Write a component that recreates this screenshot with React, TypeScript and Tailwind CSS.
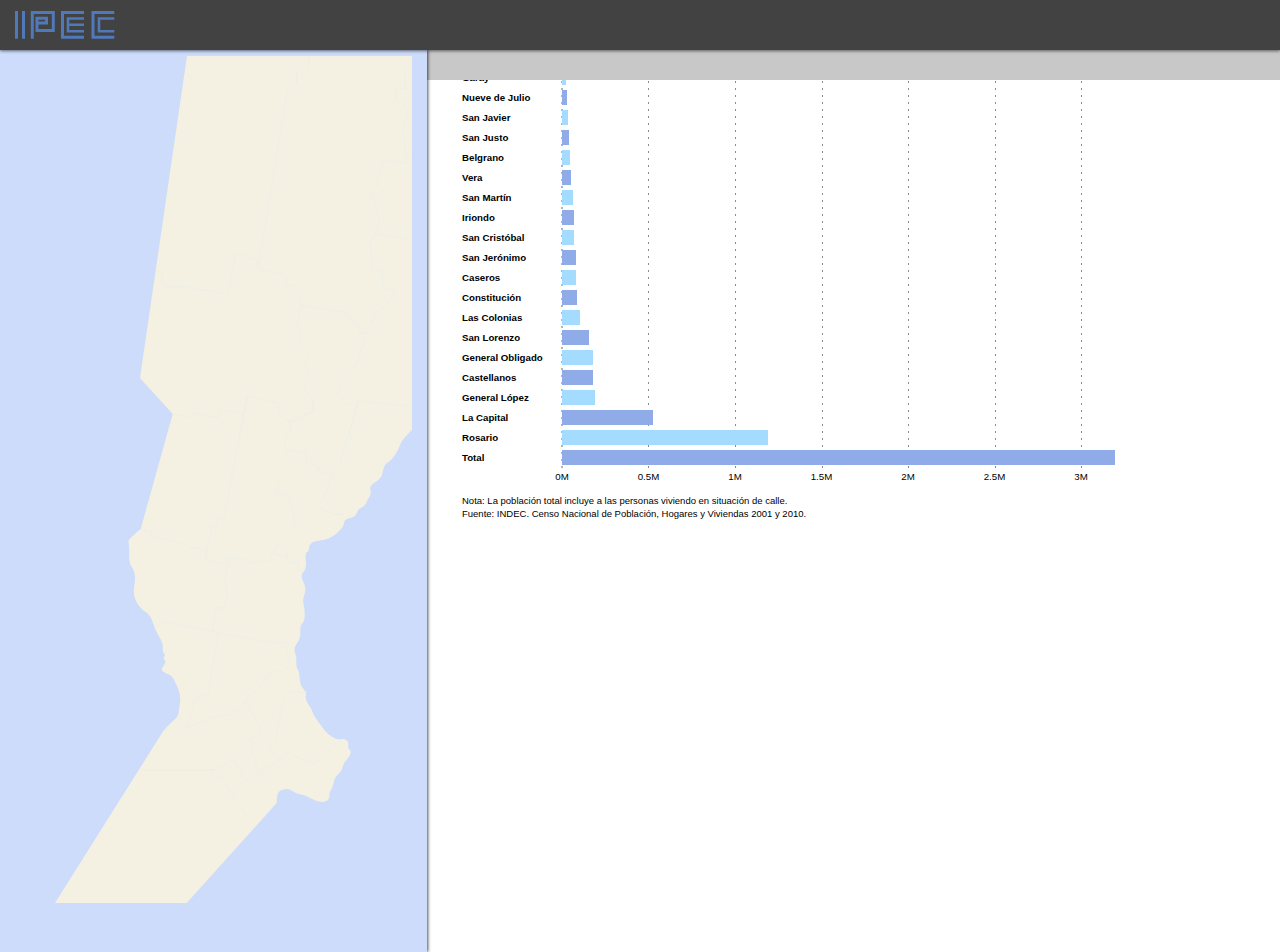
const rows: [string, number][] = [
  ["Garay", 4], ["Nueve de Julio", 5], ["San Javier", 6], ["San Justo", 7], ["Belgrano", 8],
  ["Vera", 9], ["San Martín", 11], ["Iriondo", 12], ["San Cristóbal", 12], ["San Jerónimo", 14],
  ["Caseros", 14], ["Constitución", 15], ["Las Colonias", 18], ["San Lorenzo", 27], ["General Obligado", 31],
  ["Castellanos", 31], ["General López", 33], ["La Capital", 91], ["Rosario", 206], ["Total", 553],
];
const ticks = ["0M", "0.5M", "1M", "1.5M", "2M", "2.5M", "3M"];
const gridX = [648, 735, 822, 908, 995, 1081];

const eastCoast: [number, number][] = [
  [412, 430], [402.3, 439], [398.3, 450], [391.7, 460], [386, 463.3], [383.3, 468.3], [381.7, 478.3], [369, 486],
  [371.7, 493.3], [366.7, 501], [365, 506], [357.3, 509.3], [356, 516.7], [344, 519.3], [344, 526.7], [330, 539.3],
  [313.3, 541], [309, 545.7], [309, 551], [305, 553.3], [306.7, 568.3], [300, 575.7], [306.7, 588.3], [302.3, 600],
  [305, 610], [304.3, 622], [300, 625], [300.7, 638.3], [293.3, 648.3], [296.7, 656.7], [296, 666.7], [299.3, 671.7],
  [300, 685], [306.7, 692.7], [305, 700], [311.7, 708.3], [313.3, 715], [323.3, 728.3], [326.7, 733.3], [337.3, 740],
  [345, 738.3], [349, 742.7], [347.7, 748.3], [351.7, 751.7], [348.3, 758.3], [343.3, 763.3], [341.7, 771.7],
  [335, 776.7], [332.3, 788.3], [329.3, 791.7], [329.3, 801], [318.3, 802.7], [305, 795], [295, 793.3], [289.3, 788.3],
  [280, 790], [276.7, 795], [276.7, 803],
];
const westCoast: [number, number][] = [
  [163.3, 731], [170, 723.3], [178.3, 716.7], [179.3, 706.7], [180.7, 698.3], [178.3, 688.3], [171.7, 675], [165, 673.3],
  [160.7, 669.3], [166.7, 661.7], [162.7, 658.3], [165.7, 655], [162.3, 651.7], [163.3, 643.3], [155, 630], [150.7, 615],
  [140, 608.3], [132.7, 595], [135.7, 578.3], [133.3, 568.3], [129.3, 564.3], [129.3, 545], [127.7, 540], [140.7, 529],
];

function smooth(p: [number, number][]) {
  let d = `L${p[0][0]} ${p[0][1]}`;
  for (let i = 1; i < p.length - 1; i++) {
    const mx = (p[i][0] + p[i + 1][0]) / 2;
    const my = (p[i][1] + p[i + 1][1]) / 2;
    d += `Q${p[i][0]} ${p[i][1]} ${mx} ${my}`;
  }
  const e = p[p.length - 1];
  return `${d}L${e[0]} ${e[1]}`;
}

const land = `M187 56L412 56${smooth(eastCoast)}L186.7 903L55 903${smooth(westCoast)}L172.7 414L140 378Z`;

const borders = [
  "308.7,56 308.7,69.3",
  "296.7,69.3 296.7,84 287.3,91.7 258.3,266.7",
  "236,252.7 256.7,260 258.3,268.3 285,275 286.7,285 293.3,285 301.7,303.3 301.7,305",
  "156,271 162,271 162,283.3 165,286.7 185,286.7 228.3,294.3 236,252.7",
  "301.7,305 296.7,323.3 301.7,333.3 298.3,343.3 308.3,351.7 305,361.7 308.3,376.7 304,386.7 311.7,400 314,411.7 301.7,415 290,421.7 280,416.7 278.3,403.3 247.3,396 244,414 220,409.3 218.3,417.7 193.3,412.7 192.7,418.3 172.7,414",
  "301.7,305 350,313.3 350,319.3 358.3,324 360,333.3 367,332",
  "405,69.3 405,88.3 395.7,88.3 395.7,100 404.3,105 408.3,115 402.3,128.3 406,153.3 410,163.3 386,160 378.3,173.3 377.3,186.7 382.3,190 378.3,194 369.3,191.7 375,203.3 379.3,223.3 375,233.3 370,243.3 372.7,270 381.7,270 383.3,288.3 395.7,290 386.7,305 378.3,310 371.7,321.7 367.3,331.7 356.7,363.3 345,376.7 338.3,393.3 346.7,405 358.3,401 412,406.7",
  "375,233.3 406.7,239 412,245.7",
  "358.3,401 350,430 351.7,440",
  "247.3,396 239,440",
  "246.7,400 224,518 218.3,519.7 216.7,526 211.7,526 205,560 221.7,563.7 228.3,558.5 246.7,559 248.3,562.7 269.3,561 271.7,553.9 286,556.7 287.3,552",
  "140.7,529.6 151.7,532 151.7,536.6 187.3,544.4 188.3,548 196.7,548 206.7,549.6 205,560",
  "228.3,560 225,579.6 227.3,593.7 223.3,607.7 216.7,607.7 212.3,631.7",
  "154,627 166.7,621.8 212.3,631.7 218.3,633 243.3,637.7 280,643 290,641",
  "218.3,633 208.3,694 195,697.5 187.3,727.5",
  "178.3,717 183.3,725.7 190,727.5 206.7,718.7 230,714.4 241.7,708 245,701 256.7,690.5 261.7,685 268.3,673 283.3,670.4 290,665.8 285,643",
  "245,701 260.7,726.8 258.3,736 250,738 252.7,746.8 249.3,748.6 256.7,761 254,762.7 260,771.5",
  "140,769.7 210,769.7 216.7,769.7 232.7,760 246.7,781 260,771.5 273.3,764.4 277.3,761 270,749 268.3,748.6 275,741.5 283.3,699.3 290,692 306.7,692",
  "210,769.7 215,778.5 220,775 251.7,824",
  "277.3,761 290,751.4 296.7,757.4 313.3,763.4 323.3,759 336.7,741.5",
  "286.7,449 306,453 306,462.7 318.3,466 318.3,472 331.7,474.6 326.7,491.5 318.3,507.4 333.3,514.4 343.3,514.4",
  "331.7,474.6 340,465 348.3,435 358.3,400",
  "313.3,400 313.3,410.6 296.7,421 288.3,421 291.7,431.7 286,435 285,447.5 288.3,458 291.7,461.6 285,474 278.3,482.7 276,494.4 288.3,495 292.7,509 295,525 288.3,533.8 278.3,544.4 271.7,553.9",
  "287.3,552 286.7,562 298.3,562.7 299.3,572.5",
];

function Logo() {
  return (
    <svg width="120" height="50" viewBox="0 0 120 50" fill="none" stroke="#5079ba" strokeWidth="3" className="block">
      <path d="M16.5 11V38.7M23.5 11V38.7" />
      <path d="M32.3 38.7V12.5H53.3V30.5H37V18.3H46.5V23H38" />
      <path d="M84 12.5H62.5V37.3H84" />
      <path d="M84 18.5H68V31.2H84M68 24.8H84" strokeWidth="2.6" />
      <path d="M114.3 12.5H93V37.3H114.3" />
      <path d="M114.3 18.5H99V31.2H114.3" strokeWidth="2.6" />
    </svg>
  );
}

export default function App() {
  return (
    <div className="flex h-[952px] w-[1280px] flex-col overflow-hidden bg-white font-['Liberation_Sans',Arial,sans-serif] text-[10px] text-black">
      <header className="relative z-20 h-[50px] shrink-0 bg-[#424242] shadow-[0_1px_3px_rgba(0,0,0,0.55)]">
        <Logo />
      </header>
      <div className="flex min-h-0 flex-1">
        <aside className="relative z-10 w-[427px] shrink-0 bg-[#cddcfa] shadow-[1px_0_3px_rgba(0,0,0,0.7)]">
          <svg width="427" height="902" viewBox="0 50 427 902" className="block">
            <path d={land} fill="#f5f1e2" />
            {borders.map((b) => (
              <polyline key={b} points={b} fill="none" stroke="#ebeee8" strokeWidth="0.9" />
            ))}
          </svg>
        </aside>
        <main className="flex min-w-0 flex-1 flex-col">
          <div className="relative z-[5] h-[30px] shrink-0 bg-[#c8c8c8]" />
          <div className="min-h-0 flex-1 overflow-hidden">
            <div className="mt-[-13px] pl-[35px]">
              <div className="relative">
                <div className="absolute top-0 left-[99px] h-[401px] w-[2px] bg-[linear-gradient(#b5b5b5_2px,transparent_2px)] bg-[length:100%_7px]" />
                {gridX.map((x) => (
                  <div
                    key={x}
                    className="absolute top-0 h-[401px] w-px bg-[linear-gradient(#8c8c8c_2px,transparent_2px)] bg-[length:100%_7px]"
                    style={{ left: `${x - 462}px` }}
                  />
                ))}
                {rows.map(([name, w], i) => (
                  <div key={name} className="relative flex h-5 items-start">
                    <div className="w-[100px] shrink-0 pt-[3px] text-[9.7px] leading-[15px] font-bold">{name}</div>
                    <div
                      className={`mt-[3px] h-[15px] ${i % 2 === 0 ? "bg-[#a3dcff]" : "bg-[#8fabe8]"}`}
                      style={{ width: `${w}px` }}
                    />
                  </div>
                ))}
              </div>
              <div className="ml-[56.75px] flex h-[20px] items-start">
                {ticks.map((t) => (
                  <div key={t} className="w-[86.5px] text-center text-[9.7px] leading-[20px]">{t}</div>
                ))}
              </div>
              <div className="mt-[7px] text-[9.5px] leading-[13px]">
                <p>Nota: La población total incluye a las personas viviendo en situación de calle.</p>
                <p>Fuente: INDEC. Censo Nacional de Población, Hogares y Viviendas 2001 y 2010.</p>
              </div>
            </div>
          </div>
        </main>
      </div>
    </div>
  );
}
